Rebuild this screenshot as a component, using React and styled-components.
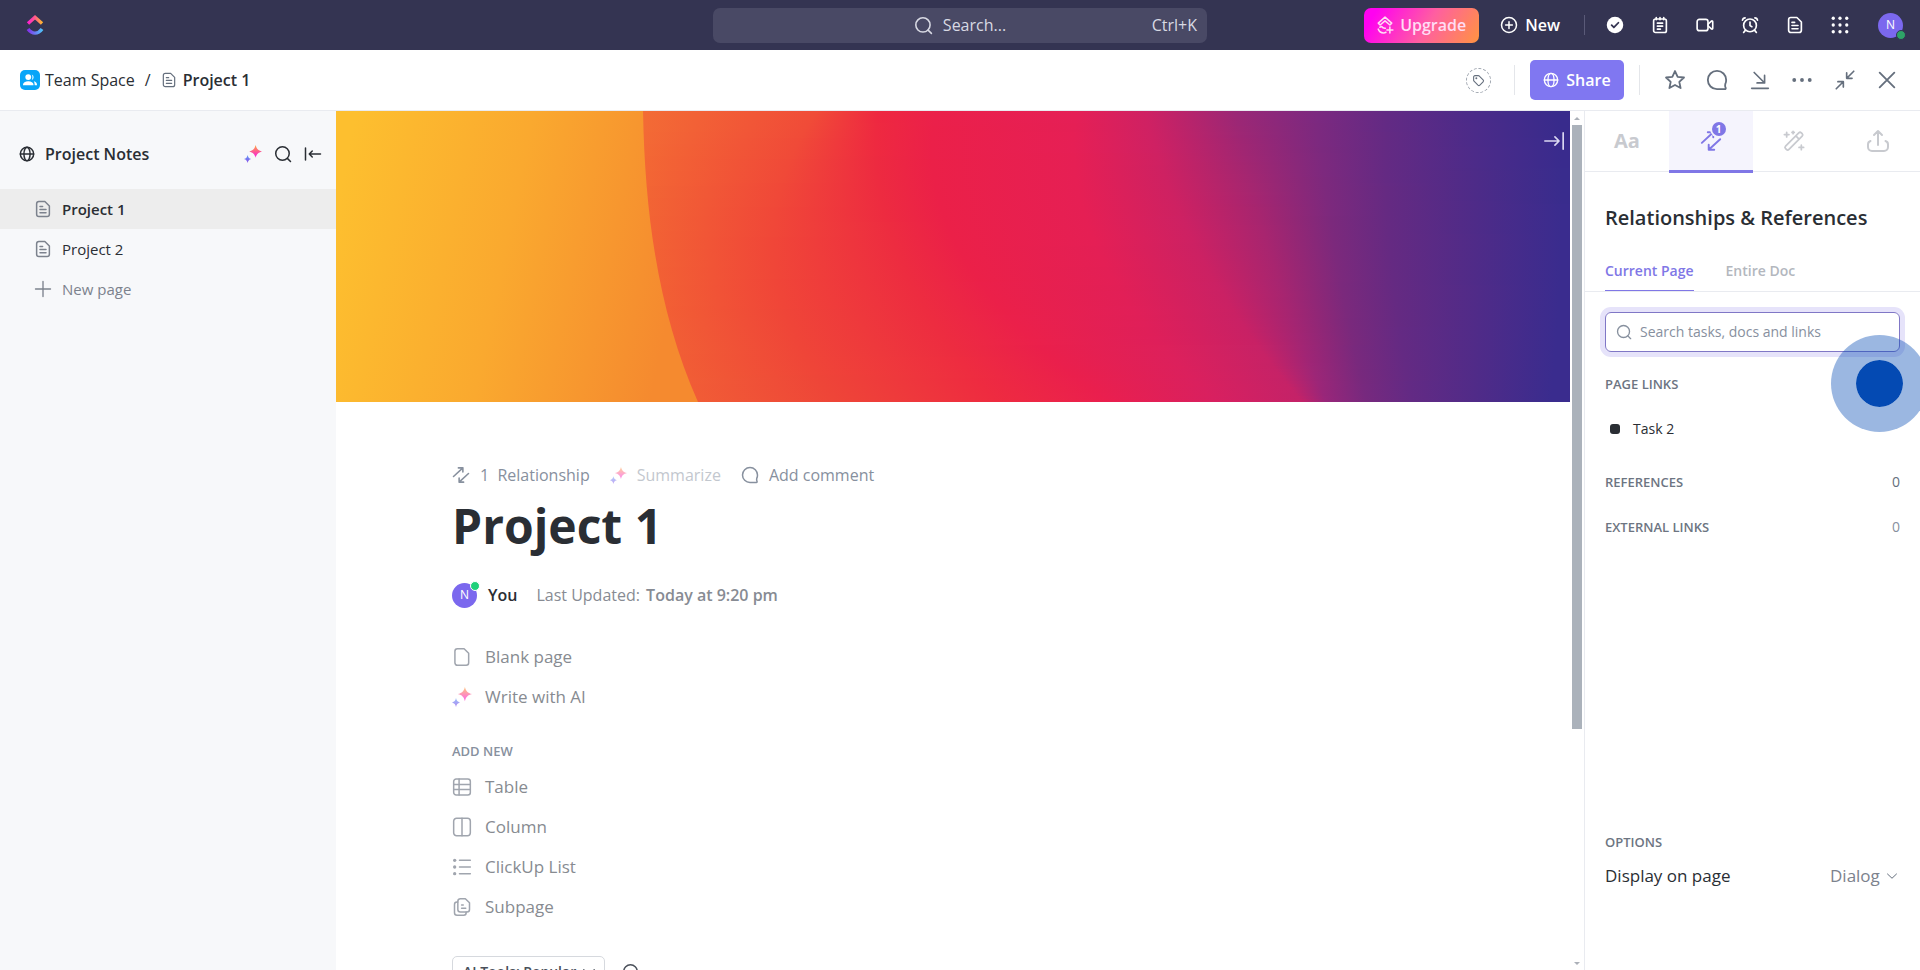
import React from "react";
import styled, { createGlobalStyle } from "styled-components";

const GlobalStyle = createGlobalStyle`
  *, *::before, *::after { box-sizing: border-box; }
  body {
    margin: 0;
    background: #fff;
    color: #2a2e34;
    font-family: "Open Sans", "Noto Sans", sans-serif;
    font-size: 16px;
    line-height: 24px;
  }
  button, input, select { font: inherit; color: inherit; }
  button { border: 0; padding: 0; background: none; cursor: pointer; }
  a { color: inherit; text-decoration: none; }
  h1, h2, h3, p, ul { margin: 0; padding: 0; }
  ul { list-style: none; }
`;

/* ---------- icons ---------- */

const Svg = styled.svg`
  display: block;
  flex: none;
  width: ${(p) => p.$size}px;
  height: ${(p) => p.$size}px;
`;

function Icon({ size = 20, weight = 2, children }) {
  return (
    <Svg
      $size={size}
      viewBox="0 0 24 24"
      fill="none"
      stroke="currentColor"
      strokeWidth={weight}
      strokeLinecap="round"
      strokeLinejoin="round"
      aria-hidden="true"
    >
      {children}
    </Svg>
  );
}

const SearchIcon = (p) => (
  <Icon {...p}>
    <circle cx="11.3" cy="11.3" r="9" />
    <path d="M17.8 17.8 22 22" />
  </Icon>
);
const GlobeIcon = (p) => (
  <Icon {...p}>
    <circle cx="12" cy="12" r="10" />
    <ellipse cx="12" cy="12" rx="4.6" ry="10" />
    <path d="M2 12h20" />
  </Icon>
);
const DocIcon = (p) => (
  <Icon {...p}>
    <path d="M6 2h8.500L20.500 8v11a3 3 0 0 1-3 3h-11a3 3 0 0 1-3-3V5a3 3 0 0 1 3-3z" />
    <path d="M8 8.500h3.500M8 12.700h8M8 17h8" />
  </Icon>
);
const BlankIcon = (p) => (
  <Icon {...p}>
    <path d="M6.500 2h8L20 7.500V19a3 3 0 0 1-3 3H6.500a3 3 0 0 1-3-3V5a3 3 0 0 1 3-3z" />
  </Icon>
);
const PlusIcon = (p) => (
  <Icon {...p}>
    <path d="M12 2v20M2 12h20" />
  </Icon>
);
const CollapseIcon = (p) => (
  <Icon {...p}>
    <path d="M2 4v16M22 12H7M11 8l-4 4 4 4" />
  </Icon>
);
const ExpandIcon = (p) => (
  <Icon {...p}>
    <path d="M22 3v18M2 12h15M13 7.500l4.500 4.500-4.500 4.500" />
  </Icon>
);
const NewIcon = (p) => (
  <Icon {...p}>
    <circle cx="12" cy="12" r="10" />
    <path d="M12 7.500v9M7.500 12h9" />
  </Icon>
);
const CheckIcon = (p) => (
  <Icon {...p}>
    <circle cx="12" cy="12" r="11" fill="currentColor" stroke="none" />
    <path d="M7.500 12.300l3 3 6-6.300" stroke="#343452" strokeWidth="2.400" />
  </Icon>
);
const NotepadIcon = (p) => (
  <Icon {...p}>
    <rect x="3.500" y="4" width="17" height="18" rx="2.500" />
    <path d="M7 2v3M12 2v3M17 2v3M8.500 9.500h7M8.500 13.500h7M8.500 17.500h4" />
  </Icon>
);
const VideoIcon = (p) => (
  <Icon {...p}>
    <rect x="1.500" y="4.500" width="14.500" height="15" rx="3" />
    <path d="M16 11l4.500-4.200c.8-.6 1.800-.1 1.800.8v8.800c0 .9-1 1.400-1.800.8L16 13" />
  </Icon>
);
const AlarmIcon = (p) => (
  <Icon {...p}>
    <circle cx="12" cy="12.500" r="8.500" />
    <path d="M12 8v4.800l2.500 1.500M2 5.500C2.300 3.800 3.800 2.500 5.500 2.500M22 5.500c-.3-1.700-1.800-3-3.500-3M5.500 19.500 3.500 22M18.500 19.500l2 2.500" />
  </Icon>
);
const GridIcon = (p) => (
  <Icon {...p}>
    <g fill="currentColor" stroke="none">
      {[3, 12, 21].map((y) =>
        [3, 12, 21].map((x) => <circle key={`${x}-${y}`} cx={x} cy={y} r="2.200" />)
      )}
    </g>
  </Icon>
);
const UpgradeIcon = (p) => (
  <Icon {...p}>
    <path d="M3 9.500 12 1.500l9 8-2.500 2.500L12 6.500 5.500 12z" />
    <path d="M3 17.500c1.200 3.200 3.800 5 7 5 1.300 0 2.400-.3 3.300-.8M5 15l2.500-1c1 1.600 2.700 2.600 5 2.300M18.500 14.500v8M14.500 18.500h8" />
  </Icon>
);
const TagIcon = (p) => (
  <Icon {...p}>
    <path d="M3 5.500A2.500 2.500 0 0 1 5.500 3h6.200c.7 0 1.300.3 1.800.7l7 7.300a2.500 2.500 0 0 1 0 3.500l-6 6a2.500 2.500 0 0 1-3.500 0L3.700 13A2.500 2.500 0 0 1 3 11.300z" />
    <circle cx="8" cy="8" r=".8" />
  </Icon>
);
const StarIcon = (p) => (
  <Icon {...p}>
    <path d="M12 2.200l2.900 6.300 6.900.8-5.100 4.700 1.400 6.800-6.100-3.400-6.100 3.400 1.400-6.800-5.100-4.700 6.900-.8z" />
  </Icon>
);
const CommentIcon = (p) => (
  <Icon {...p}>
    <path d="M22 12A10 10 0 1 0 12 22h8.500a1 1 0 0 0 .9-1.500c-.7-1.400-.8-2.500-.4-3.900A10 10 0 0 0 22 12z" />
  </Icon>
);
const DownIcon = (p) => (
  <Icon {...p}>
    <path d="M5 3l12 12M17.500 6.500V15.500H8.500M2 22h20" />
  </Icon>
);
const DotsIcon = (p) => (
  <Icon {...p}>
    <g fill="currentColor" stroke="none">
      <circle cx="2.700" cy="12" r="2.300" />
      <circle cx="12" cy="12" r="2.300" />
      <circle cx="21.300" cy="12" r="2.300" />
    </g>
  </Icon>
);
const ShrinkIcon = (p) => (
  <Icon {...p}>
    <path d="M22.500 1.500 15 9M14 3.500V10h6.500M1.500 22.500 9 15M10 20.500V14H3.500" />
  </Icon>
);
const CloseIcon = (p) => (
  <Icon {...p}>
    <path d="M4 4l16 16M20 4 4 20" />
  </Icon>
);
const LinkIcon = (p) => (
  <Icon {...p}>
    <path d="M2 14 14.500 2.500M8.500 2.500h6v5.500M22 10 9.500 21.500M9.500 16v5.500h6" />
  </Icon>
);
const WandIcon = (p) => (
  <Icon {...p}>
    <path d="M2.800 17.500 17.200 3.100a2 2 0 0 1 2.800 0l.9.900a2 2 0 0 1 0 2.800L6.500 21.200a2 2 0 0 1-2.800 0l-.9-.900a2 2 0 0 1 0-2.800zM14 6.500l3.500 3.500" />
    <path d="M4 2.500v5M1.500 5h5M20 16.500v5M17.500 19h5M11 1.500v2.500M9.800 2.700h2.500" />
  </Icon>
);
const UploadIcon = (p) => (
  <Icon {...p}>
    <path d="M12 16V2M8 6l4-4 4 4M4.500 12C2.800 12.500 2 14 2 15.500V18a4 4 0 0 0 4 4h12a4 4 0 0 0 4-4v-2.500c0-1.500-.8-3-2.500-3.500" />
  </Icon>
);
const TableIcon = (p) => (
  <Icon {...p}>
    <rect x="2" y="2.500" width="20" height="19" rx="3" />
    <path d="M2 9h20M2 15h20M8.500 2.500v19" />
  </Icon>
);
const ColumnIcon = (p) => (
  <Icon {...p}>
    <rect x="2" y="1.500" width="20" height="21" rx="3.500" />
    <path d="M12 1.500v21" />
  </Icon>
);
const ListIcon = (p) => (
  <Icon {...p}>
    <path d="M9 4h13M9 12h13M9 20h13" />
    <g fill="currentColor" stroke="none">
      <circle cx="3.200" cy="4" r="2" />
      <circle cx="3.200" cy="12" r="2" />
      <circle cx="3.200" cy="20" r="2" />
    </g>
  </Icon>
);
const SubpageIcon = (p) => (
  <Icon {...p}>
    <path d="M10 2h6l5 5v8a3 3 0 0 1-3 3h-8a3 3 0 0 1-3-3V5a3 3 0 0 1 3-3z" />
    <path d="M7 6H6a3 3 0 0 0-3 3v10a3 3 0 0 0 3 3h8a3 3 0 0 0 3-3v-1M11.500 9.500h2M11.500 13.500h5" />
  </Icon>
);
const ChevronIcon = (p) => (
  <Icon {...p}>
    <path d="M3 8l9 8.500L21 8" />
  </Icon>
);

const SparkleSvg = styled(Svg)`
  opacity: ${(p) => (p.$soft ? 0.65 : 1)};
`;

function Sparkle({ size = 18, id, soft }) {
  return (
    <SparkleSvg $size={size} $soft={soft} viewBox="0 0 24 24" aria-hidden="true">
      <defs>
        <linearGradient id={`${id}-a`} x1="0" y1="0" x2="0" y2="1">
          <stop offset=".1" stopColor="#ff9a4a" />
          <stop offset=".8" stopColor="#fb2fc4" />
        </linearGradient>
        <linearGradient id={`${id}-b`} x1="0" y1="0" x2="0" y2="1">
          <stop offset="0" stopColor="#5fa0f8" />
          <stop offset="1" stopColor="#8a4be8" />
        </linearGradient>
      </defs>
      <path
        d="M15.500 0c1.300 5 3.300 7.200 8.500 8.500-5.200 1.300-7.200 3.500-8.500 8.500-1.300-5-3.300-7.200-8.500-8.500C12.200 7.200 14.200 5 15.500 0z"
        fill={`url(#${id}-a)`}
      />
      <path
        d="M4.800 13.200c.8 3.200 1.700 4.500 4.800 5.400-3.100.9-4 2.200-4.800 5.400-.8-3.200-1.700-4.500-4.800-5.400 3.100-.9 4-2.200 4.800-5.400z"
        fill={`url(#${id}-b)`}
      />
    </SparkleSvg>
  );
}

function Logo() {
  return (
    <Svg $size={20} viewBox="0 0 20 20" aria-hidden="true">
      <defs>
        <linearGradient id="logo-top" x1="0" y1="0" x2="1" y2="0">
          <stop offset="0" stopColor="#ff1fd0" />
          <stop offset=".5" stopColor="#ff5c88" />
          <stop offset="1" stopColor="#ffb630" />
        </linearGradient>
        <linearGradient id="logo-bottom" x1="0" y1="0" x2="1" y2="0">
          <stop offset="0" stopColor="#8430ea" />
          <stop offset="1" stopColor="#50c0fa" />
        </linearGradient>
      </defs>
      <path d="M3 8.500 10 2.300l7 6.200" fill="none" stroke="url(#logo-top)" strokeWidth="3.400" />
      <path d="M3 14c4 5.500 10 5.500 14 0" fill="none" stroke="url(#logo-bottom)" strokeWidth="3.400" />
    </Svg>
  );
}

const PeopleIcon = () => (
  <Svg $size={14} viewBox="0 0 24 24" fill="#fff" aria-hidden="true">
    <circle cx="9" cy="7" r="5" />
    <path d="M0 20c0-4 4-6 9-6s9 2 9 6v1H0z" />
    <path d="M15 2.500a5 5 0 0 1 0 9.300c1.700-3 1.700-6.300 0-9.300zM18.500 14c3.500.8 5.500 3 5.500 6v1h-4c0-3-.4-5-1.500-7z" />
  </Svg>
);

/* ---------- cover art ---------- */

const COVER_W = 1234;
const COVER_H = 291;
const SLICE = 3;

// Each band: x at the top, middle and bottom of the cover, and its colour there.
const BANDS = [
  [300, 310, 355, "#f36d35", "#f26334", "#f15d36"],
  [480, 438, 500, "#f04c38", "#f04638", "#ee4538"],
  [542, 563, 660, "#ee2840", "#ed2c40", "#ee2b40"],
  [600, 627, 770, "#eb204a", "#eb2048", "#ea1f4e"],
  [740, 765, 880, "#e51f56", "#e41f55", "#d82060"],
  [810, 865, 965, "#cf2163", "#cc2163", "#c42268"],
  [900, 935, 990, "#9a2776", "#a8256f", "#98267a"],
  [980, 1000, 1030, "#7c2980", "#7c297c", "#77297e"],
  [1050, 1055, 1075, "#632a84", "#652a82", "#632a84"],
  [1140, 1140, 1140, "#4a2b89", "#4f2b88", "#502b88"],
  [1225, 1225, 1215, "#382b8c", "#3a2c8e", "#3a2c8e"],
];

const toRgb = (hex) => [1, 3, 5].map((i) => parseInt(hex.slice(i, i + 2), 16));
const blend = (a, b, c, t) => {
  const w = [(1 - t) * (1 - 2 * t), 4 * t * (1 - t), t * (2 * t - 1)];
  return a * w[0] + b * w[1] + c * w[2];
};

function CoverArt() {
  const rows = Array.from({ length: COVER_H / SLICE }, (_, i) => i);
  return (
    <CoverSvg viewBox={`0 0 ${COVER_W} ${COVER_H}`} preserveAspectRatio="none" aria-hidden="true">
      <defs>
        <linearGradient id="cover-sun" gradientUnits="userSpaceOnUse" x1="20" y1="0" x2="360" y2="70">
          <stop offset="0" stopColor="#fdbf2f" />
          <stop offset=".5" stopColor="#faa92f" />
          <stop offset="1" stopColor="#f58a2f" />
        </linearGradient>
        {rows.map((i) => {
          const t = (i * SLICE) / (COVER_H - SLICE);
          return (
            <linearGradient key={i} id={`cover-${i}`} gradientUnits="userSpaceOnUse" x1="0" x2={COVER_W} y1="0" y2="0">
              {BANDS.map(([xa, xb, xc, ca, cb, cc], k) => {
                const [a, b, c] = [toRgb(ca), toRgb(cb), toRgb(cc)];
                const rgb = a.map((v, n) => Math.round(Math.max(0, Math.min(255, blend(v, b[n], c[n], t)))));
                return <stop key={k} offset={blend(xa, xb, xc, t) / COVER_W} stopColor={`rgb(${rgb.join(",")})`} />;
              })}
            </linearGradient>
          );
        })}
      </defs>
      <g shapeRendering="crispEdges">
        {rows.map((i) => (
          <rect key={i} x="0" y={i * SLICE} width={COVER_W} height={SLICE} fill={`url(#cover-${i})`} />
        ))}
      </g>
      <path d="M0 0H307C309 110 324 205 362 291H0z" fill="url(#cover-sun)" />
    </CoverSvg>
  );
}

/* ---------- shared parts ---------- */

const Divider = styled.span`
  width: 1px;
  height: ${(p) => p.$height}px;
  background: ${(p) => p.$color};
`;

const IconButton = styled.button`
  display: grid;
  place-items: center;
  width: 24px;
  height: 24px;
`;

const Avatar = styled.span`
  position: relative;
  display: grid;
  place-items: center;
  flex: none;
  width: 25px;
  height: 25px;
  border-radius: 50%;
  background: #7b68ee;
  color: #fff;
  font-size: 12px;
  line-height: 16px;
`;

const OnlineDot = styled.span`
  position: absolute;
  right: -3px;
  ${(p) => (p.$top ? "top: -2px;" : "bottom: -2px;")}
  width: 10px;
  height: 10px;
  border: 1px solid ${(p) => p.$ring};
  border-radius: 50%;
  background: ${(p) => p.$color};
`;

/* ---------- page frame ---------- */

const Page = styled.div`
  position: relative;
  display: flex;
  flex-direction: column;
  height: 100vh;
  overflow: hidden;
`;

const TopBar = styled.header`
  display: grid;
  grid-template-columns: 1fr minmax(200px, 494px) 1fr;
  align-items: center;
  flex: none;
  height: 50px;
  padding: 0 17px;
  background: #343452;
  color: #fff;
`;

const LogoLink = styled.a`
  justify-self: start;
  margin-left: 8px;
`;

const GlobalSearch = styled.button`
  display: grid;
  grid-template-columns: 1fr auto 1fr;
  align-items: center;
  height: 35px;
  padding: 0 10px;
  border-radius: 7px;
  background: #494965;
  color: #d8d9e3;
`;

const SearchHint = styled.span`
  grid-column: 2;
  display: flex;
  align-items: center;
  gap: 10px;
`;

const Shortcut = styled.span`
  justify-self: end;
`;

const TopActions = styled.div`
  display: flex;
  align-items: center;
  justify-self: end;
`;

const UpgradeButton = styled.button`
  display: flex;
  align-items: center;
  gap: 6px;
  height: 35px;
  margin-right: 21px;
  padding: 0 13px 0 12px;
  border-radius: 7px;
  background: linear-gradient(120deg, #ff02f0 10%, #ff5fa0 55%, #ff9440 100%);
  color: #ffdcf4;
  font-weight: 600;
`;

const NewButton = styled.button`
  display: flex;
  align-items: center;
  gap: 7px;
  margin-right: 24px;
  font-weight: 600;
`;

const Shortcuts = styled.div`
  display: flex;
  gap: 21px;
  margin: 0 26px 0 18px;
`;

const DocBar = styled.div`
  display: flex;
  align-items: center;
  justify-content: space-between;
  flex: none;
  height: 61px;
  padding: 0 21px 0 20px;
  border-bottom: 1px solid #e9ebf0;
`;

const Breadcrumb = styled.nav`
  display: flex;
  align-items: center;
`;

const SpaceBadge = styled.span`
  display: grid;
  place-items: center;
  width: 20px;
  height: 20px;
  margin-right: 5px;
  border-radius: 5px;
  background: #08a5f8;
`;

const Slash = styled.span`
  margin: 0 10px;
`;

const CurrentCrumb = styled.a`
  display: flex;
  align-items: center;
  gap: 6px;
  font-weight: 600;

  svg { color: #656f7d; }
`;

const DocActions = styled.div`
  display: flex;
  align-items: center;
  color: #656f7d;
`;

const TagButton = styled.button`
  display: grid;
  place-items: center;
  width: 25px;
  height: 25px;
  margin-right: 23px;
  border: 1px dashed #9aa1ab;
  border-radius: 50%;
`;

const ShareButton = styled.button`
  display: flex;
  align-items: center;
  justify-content: center;
  gap: 7px;
  width: 94px;
  height: 40px;
  margin: 0 15px;
  border-radius: 5px;
  background: #8077f1;
  color: #fff;
  font-weight: 600;
`;

const DocTools = styled.div`
  display: flex;
  justify-content: space-between;
  width: 236px;
  margin-left: 23px;
`;

const Body = styled.div`
  display: grid;
  grid-template-columns: 336px minmax(0, 1fr) 336px;
  flex: 1;
  min-height: 0;
`;

/* ---------- sidebar ---------- */

const Sidebar = styled.aside`
  background: #f7f8fa;
`;

const SidebarHeader = styled.div`
  display: flex;
  align-items: center;
  height: 78px;
  padding: 8px 11px 0 19px;
`;

const SidebarTitle = styled.h2`
  flex: 1;
  margin-left: 10px;
  font-size: 16px;
  font-weight: 600;
`;

const SidebarTools = styled.div`
  display: flex;
  gap: 6px;
`;

const PageLink = styled.a`
  display: flex;
  align-items: center;
  gap: 10px;
  height: 40px;
  padding-left: 34px;
  background: ${(p) => (p.$active ? "#ededed" : "transparent")};
  color: ${(p) => (p.$muted ? "#7c828d" : "#2a2e34")};
  font-size: 15px;
  font-weight: ${(p) => (p.$active ? 600 : 400)};

  svg { color: #7c828d; }
`;

/* ---------- document ---------- */

const DocColumn = styled.div`
  display: grid;
  grid-template-columns: minmax(0, 1fr) 14px;
  min-height: 0;
`;

const DocScroll = styled.main`
  overflow: hidden;
`;

const Cover = styled.div`
  position: relative;
  height: 291px;
`;

const CoverSvg = styled.svg`
  display: block;
  width: 100%;
  height: 100%;
`;

const CoverToggle = styled.button`
  position: absolute;
  top: 19px;
  right: 5px;
  color: #dcd9f2;
`;

const DocContent = styled.div`
  padding: 61px 116px 0;
  color: #87909e;
`;

const MetaRow = styled.div`
  display: flex;
  gap: 20px;
`;

const MetaButton = styled.button`
  display: flex;
  align-items: center;
  gap: 10px;
  opacity: ${(p) => (p.$faded ? 0.5 : 1)};
`;

const DocTitle = styled.h1`
  margin-top: 7px;
  color: #2a2e34;
  font-size: 48px;
  font-weight: 700;
  line-height: 64px;
`;

const Author = styled.div`
  display: flex;
  align-items: center;
  height: 26px;
  margin: 24px 0 29px;
`;

const AuthorName = styled.span`
  margin: 0 19px 0 11px;
  color: #2a2e34;
  font-weight: 600;
`;

const Updated = styled.p`
  color: #878b93;

  strong { margin-left: 2px; font-weight: 600; }
`;

const ActionButton = styled.button`
  display: flex;
  align-items: center;
  gap: 13px;
  height: 40px;
  color: #878b91;
  font-size: 17px;

  svg { color: #a0a5ae; }
`;

const GroupLabel = styled.h3`
  margin: 24px 0 6px;
  font-size: 13px;
  font-weight: 600;
  line-height: 20px;
`;

const ToolsRow = styled.div`
  display: flex;
  align-items: center;
  gap: 14px;
  margin-top: 29px;
  color: #4a505a;
`;

const ToolsPicker = styled.button`
  display: flex;
  align-items: center;
  gap: 6px;
  height: 32px;
  padding: 0 8px 0 10px;
  border: 1px solid #d6d9de;
  border-radius: 5px;
  font-size: 14px;
  font-weight: 600;
`;

const ScrollTrack = styled.div`
  display: flex;
  flex-direction: column;
  align-items: center;
  padding: 6px 0 5px;
`;

const ScrollThumbArea = styled.div`
  flex: 1;
  margin: 5px 0;
`;

const ScrollThumb = styled.div`
  width: 10px;
  height: 72.6%;
  background: #abb2bb;
`;

const ScrollArrow = styled.span`
  border: 3px solid transparent;
  ${(p) => (p.$down ? "border-top-color: #abb0b8; border-bottom-width: 0;" : "border-bottom-color: #abb0b8; border-top-width: 0;")}
`;

/* ---------- right panel ---------- */

const Panel = styled.aside`
  display: flex;
  flex-direction: column;
  border-left: 1px solid #e9ebf0;
`;

const PanelTabs = styled.div`
  display: grid;
  grid-template-columns: repeat(4, 1fr);
  height: 61px;
  border-bottom: 1px solid #e9ebf0;
`;

const PanelTab = styled.button`
  position: relative;
  display: grid;
  place-items: center;
  height: 62px;
  border-bottom: 3px solid ${(p) => (p.$active ? "#8077e6" : "transparent")};
  background: ${(p) => (p.$active ? "#f5f4fd" : "transparent")};
  color: ${(p) => (p.$active ? "#8077e6" : "#c8cacf")};
  font-size: 20px;
  font-weight: 700;
`;

const Count = styled.span`
  position: absolute;
  top: 11px;
  right: 27px;
  width: 14px;
  height: 14px;
  border-radius: 50%;
  background: #8077e6;
  box-shadow: 0 0 0 2px #f5f4fd;
  color: #fff;
  font-size: 10px;
  line-height: 14px;
`;

const PanelTitle = styled.h2`
  padding: 32px 20px 24px;
  font-size: 20px;
  font-weight: 600;
  line-height: 28px;
`;

const ScopeTabs = styled.div`
  display: flex;
  gap: 32px;
  height: 36px;
  padding: 0 20px;
  border-bottom: 1px solid #e9ebf0;
`;

const ScopeTab = styled.button`
  height: 35px;
  padding-bottom: 5px;
  border-bottom: 1px solid ${(p) => (p.$active ? "#8077e6" : "transparent")};
  color: ${(p) => (p.$active ? "#8077e6" : "#b3b7be")};
  font-size: 14px;
  font-weight: 600;
`;

const SearchField = styled.label`
  display: flex;
  align-items: center;
  gap: 8px;
  height: 40px;
  margin: 20px 20px 18px;
  padding: 0 10px;
  border: 1px solid #8077c6;
  border-radius: 6px;
  box-shadow: 0 0 0 5px #e6e3fa;
  color: #87909e;
`;

const SearchInput = styled.input`
  flex: 1;
  min-width: 0;
  padding: 0;
  border: 0;
  outline: 0;
  background: none;
  font-size: 14px;

  &::placeholder { color: #87909e; opacity: 1; }
`;

const Section = styled.section`
  padding: 0 20px;
`;

const SectionHead = styled.div`
  display: flex;
  align-items: center;
  justify-content: space-between;
  height: 28px;
  margin-bottom: ${(p) => p.$gap || 0}px;
  color: #6d7582;
`;

const SectionTitle = styled.h3`
  font-size: 13px;
  font-weight: 600;
`;

const SectionCount = styled.span`
  font-size: 14px;
  color: ${(p) => (p.$muted ? "#87909e" : "#656f7d")};
`;

const TaskLink = styled.a`
  display: flex;
  align-items: center;
  gap: 13px;
  height: 28px;
  margin-bottom: 25px;
  padding-left: 5px;
  font-size: 14px;

  &::before {
    content: "";
    width: 10px;
    height: 10px;
    border-radius: 3px;
    background: #2a2e34;
  }
`;

const Options = styled(Section)`
  margin-top: auto;
  padding-bottom: 82px;
`;

const OptionRow = styled.div`
  display: flex;
  align-items: center;
  justify-content: space-between;
  margin-top: 8px;
  font-size: 17px;
`;

const SelectWrap = styled.span`
  display: flex;
  align-items: center;
  gap: 6px;
  padding-right: 2px;
  color: #656f7d;

  select {
    appearance: none;
    padding: 0;
    border: 0;
    background: none;
    color: #7c828d;
  }
`;

const ClickMarker = styled.div`
  position: absolute;
  top: 335px;
  right: -8px;
  width: 97px;
  height: 97px;
  border: 25px solid rgba(4, 74, 179, 0.4);
  border-radius: 50%;
  background: #044ab3;
  background-clip: padding-box;
  pointer-events: none;
`;

const TOP_ICONS = [
  ["Tasks", CheckIcon],
  ["Notepad", NotepadIcon],
  ["Record clip", VideoIcon],
  ["Reminders", AlarmIcon],
  ["Docs", DocIcon],
  ["Apps", GridIcon],
];

const DOC_TOOLS = [
  ["Favorite", StarIcon, 22],
  ["Comments", CommentIcon, 22],
  ["Dock", DownIcon, 20],
  ["More", DotsIcon, 20],
  ["Minimize", ShrinkIcon, 20],
  ["Close", CloseIcon, 22],
];

const ADD_NEW = [
  ["Table", TableIcon],
  ["Column", ColumnIcon],
  ["ClickUp List", ListIcon],
  ["Subpage", SubpageIcon],
];

export default function App() {
  return (
    <Page>
      <GlobalStyle />
      <TopBar>
        <LogoLink href="#home" aria-label="Home"><Logo /></LogoLink>
        <GlobalSearch>
          <SearchHint><SearchIcon size={19} />Search...</SearchHint>
          <Shortcut>Ctrl+K</Shortcut>
        </GlobalSearch>
        <TopActions>
          <UpgradeButton><UpgradeIcon size={18} />Upgrade</UpgradeButton>
          <NewButton><NewIcon size={18} />New</NewButton>
          <Divider $height={20} $color="#5a5a78" />
          <Shortcuts>
            {TOP_ICONS.map(([name, Glyph]) => (
              <IconButton key={name} aria-label={name}><Glyph size={18} weight={2.2} /></IconButton>
            ))}
          </Shortcuts>
          <Avatar>N<OnlineDot $color="#2ea367" $ring="#343452" /></Avatar>
        </TopActions>
      </TopBar>

      <DocBar>
        <Breadcrumb aria-label="Breadcrumb">
          <SpaceBadge><PeopleIcon /></SpaceBadge>
          <a href="#space">Team Space</a>
          <Slash>/</Slash>
          <CurrentCrumb href="#project-1"><DocIcon size={16} weight={1.8} />Project 1</CurrentCrumb>
        </Breadcrumb>
        <DocActions>
          <TagButton aria-label="Add tag"><TagIcon size={13} /></TagButton>
          <Divider $height={30} $color="#e4e6ea" />
          <ShareButton><GlobeIcon size={16} />Share</ShareButton>
          <Divider $height={30} $color="#e4e6ea" />
          <DocTools>
            {DOC_TOOLS.map(([name, Glyph, size]) => (
              <IconButton key={name} aria-label={name}><Glyph size={size} weight={2} /></IconButton>
            ))}
          </DocTools>
        </DocActions>
      </DocBar>

      <Body>
        <Sidebar>
          <SidebarHeader>
            <GlobeIcon size={16} weight={2.2} />
            <SidebarTitle>Project Notes</SidebarTitle>
            <SidebarTools>
              <IconButton aria-label="Ask AI"><Sparkle id="side" size={18} /></IconButton>
              <IconButton aria-label="Search pages"><SearchIcon size={18} /></IconButton>
              <IconButton aria-label="Collapse sidebar"><CollapseIcon size={18} /></IconButton>
            </SidebarTools>
          </SidebarHeader>
          <nav aria-label="Pages">
            <PageLink href="#project-1" $active><DocIcon size={18} />Project 1</PageLink>
            <PageLink href="#project-2"><DocIcon size={18} />Project 2</PageLink>
            <PageLink href="#new" $muted><PlusIcon size={18} weight={1.8} />New page</PageLink>
          </nav>
        </Sidebar>

        <DocColumn>
          <DocScroll>
            <Cover>
              <CoverArt />
              <CoverToggle aria-label="Hide panel"><ExpandIcon size={22} weight={1.8} /></CoverToggle>
            </Cover>
            <DocContent>
              <MetaRow>
                <MetaButton><LinkIcon size={18} weight={2.1} /><span>1&nbsp; Relationship</span></MetaButton>
                <MetaButton $faded><Sparkle id="meta" size={17} />Summarize</MetaButton>
                <MetaButton><CommentIcon size={18} weight={2} />Add comment</MetaButton>
              </MetaRow>
              <DocTitle>Project 1</DocTitle>
              <Author>
                <Avatar>N<OnlineDot $top $color="#1fd07a" $ring="#fff" /></Avatar>
                <AuthorName>You</AuthorName>
                <Updated>Last Updated: <strong>Today at 9:20 pm</strong></Updated>
              </Author>
              <ActionButton><BlankIcon size={20} weight={1.8} />Blank page</ActionButton>
              <ActionButton><Sparkle id="write" size={20} soft />Write with AI</ActionButton>
              <GroupLabel>ADD NEW</GroupLabel>
              {ADD_NEW.map(([name, Glyph]) => (
                <ActionButton key={name}><Glyph size={20} weight={1.8} />{name}</ActionButton>
              ))}
              <ToolsRow>
                <ToolsPicker>AI Tools: Popular<ChevronIcon size={14} /></ToolsPicker>
                <IconButton aria-label="Search tools"><SearchIcon size={18} /></IconButton>
              </ToolsRow>
            </DocContent>
          </DocScroll>
          <ScrollTrack aria-hidden="true">
            <ScrollArrow />
            <ScrollThumbArea><ScrollThumb /></ScrollThumbArea>
            <ScrollArrow $down />
          </ScrollTrack>
        </DocColumn>

        <Panel>
          <PanelTabs>
            <PanelTab>Aa</PanelTab>
            <PanelTab $active aria-label="Relationships"><LinkIcon size={22} weight={2.1} /><Count>1</Count></PanelTab>
            <PanelTab aria-label="AI tools"><WandIcon size={22} weight={1.9} /></PanelTab>
            <PanelTab aria-label="Export"><UploadIcon size={24} /></PanelTab>
          </PanelTabs>
          <PanelTitle>Relationships &amp; References</PanelTitle>
          <ScopeTabs>
            <ScopeTab $active>Current Page</ScopeTab>
            <ScopeTab>Entire Doc</ScopeTab>
          </ScopeTabs>
          <SearchField>
            <SearchIcon size={16} />
            <SearchInput aria-label="Search tasks, docs and links" placeholder="Search tasks, docs and links" />
          </SearchField>
          <Section>
            <SectionHead $gap={17}><SectionTitle>PAGE LINKS</SectionTitle></SectionHead>
            <TaskLink href="#task-2">Task 2</TaskLink>
            <SectionHead $gap={17}>
              <SectionTitle>REFERENCES</SectionTitle><SectionCount>0</SectionCount>
            </SectionHead>
            <SectionHead>
              <SectionTitle>EXTERNAL LINKS</SectionTitle><SectionCount $muted>0</SectionCount>
            </SectionHead>
          </Section>
          <Options>
            <SectionHead><SectionTitle>OPTIONS</SectionTitle></SectionHead>
            <OptionRow>
              <label htmlFor="display">Display on page</label>
              <SelectWrap>
                <select id="display" defaultValue="Dialog"><option>Dialog</option></select>
                <ChevronIcon size={12} />
              </SelectWrap>
            </OptionRow>
          </Options>
        </Panel>
      </Body>
      <ClickMarker />
    </Page>
  );
}
